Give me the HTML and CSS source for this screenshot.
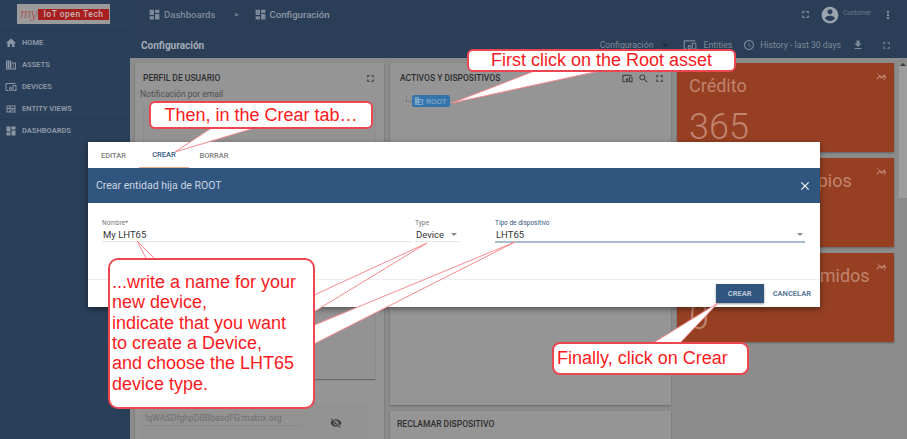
FILE: index.html
```html
<!DOCTYPE html>
<html lang="es">
<head>
  <meta charset="UTF-8">
  <meta name="viewport" content="width=device-width, initial-scale=1.0">
  <title>Configuración</title>
  <link rel="stylesheet" href="styles.css">
</head>
<body>
  <svg class="sprite" xmlns="http://www.w3.org/2000/svg">
    <symbol id="i-home" viewBox="0 0 24 24"><path d="M10 20v-6h4v6h5v-8h3L12 3 2 12h3v8z"/></symbol>
    <symbol id="i-domain" viewBox="0 0 24 24"><path d="M12 7V3H2v18h20V7H12zM6 19H4v-2h2v2zm0-4H4v-2h2v2zm0-4H4V9h2v2zm0-4H4V5h2v2zm4 12H8v-2h2v2zm0-4H8v-2h2v2zm0-4H8V9h2v2zm0-4H8V5h2v2zm10 12h-8v-2h2v-2h-2v-2h2v-2h-2V9h8v10zm-2-8h-2v2h2v-2zm0 4h-2v2h2v-2z"/></symbol>
    <symbol id="i-devices" viewBox="0 0 24 24"><path d="M3 6h18V4H3c-1.1 0-2 .9-2 2v12c0 1.1.9 2 2 2h4v-2H3V6zm10 6H9v1.78c-.61.55-1 1.33-1 2.22s.39 1.67 1 2.22V20h4v-1.78c.61-.55 1-1.34 1-2.22s-.39-1.67-1-2.22V12zm-2 5.5c-.83 0-1.5-.67-1.5-1.5s.67-1.5 1.5-1.5 1.5.67 1.5 1.5-.67 1.5-1.5 1.5zM22 8h-6c-.5 0-1 .5-1 1v10c0 .5.5 1 1 1h6c.5 0 1-.5 1-1V9c0-.5-.5-1-1-1zm-1 10h-4v-8h4v8z"/></symbol>
    <symbol id="i-views" viewBox="0 0 24 24"><path d="M3 5h18v14H3zM5 7v3h4V7zm6 0v3h8V7zm-6 5v5h4v-5zm6 0v2h3v-2zm5 0v2h3v-2zm-5 3v2h8v-2z" fill-rule="evenodd"/></symbol>
    <symbol id="i-dash" viewBox="0 0 24 24"><path d="M3 13h8V3H3v10zm0 8h8v-6H3v6zm10 0h8V11h-8v10zm0-18v6h8V3h-8z"/></symbol>
    <symbol id="i-full" viewBox="0 0 24 24"><path d="M7 14H5v5h5v-2H7v-3zm-2-4h2V7h3V5H5v5zm12 7h-3v2h5v-5h-2v3zM14 5v2h3v3h2V5h-5z"/></symbol>
    <symbol id="i-account" viewBox="0 0 24 24"><path d="M12 2C6.48 2 2 6.48 2 12s4.48 10 10 10 10-4.48 10-10S17.52 2 12 2zm0 3c1.66 0 3 1.34 3 3s-1.34 3-3 3-3-1.34-3-3 1.34-3 3-3zm0 14.2c-2.5 0-4.71-1.28-6-3.22.03-1.99 4-3.08 6-3.08 1.99 0 5.97 1.09 6 3.08-1.29 1.94-3.5 3.22-6 3.22z"/></symbol>
    <symbol id="i-more" viewBox="0 0 24 24"><path d="M12 8c1.1 0 2-.9 2-2s-.9-2-2-2-2 .9-2 2 .9 2 2 2zm0 2c-1.1 0-2 .9-2 2s.9 2 2 2 2-.9 2-2-.9-2-2-2zm0 6c-1.1 0-2 .9-2 2s.9 2 2 2 2-.9 2-2-.9-2-2-2z"/></symbol>
    <symbol id="i-search" viewBox="0 0 24 24"><path d="M15.5 14h-.79l-.28-.27C15.41 12.59 16 11.11 16 9.5 16 5.91 13.09 3 9.5 3S3 5.91 3 9.5 5.91 16 9.5 16c1.61 0 3.09-.59 4.23-1.57l.27.28v.79l5 4.99L20.49 19l-4.99-5zm-6 0C7.01 14 5 11.99 5 9.5S7.01 5 9.5 5 14 7.01 14 9.5 11.99 14 9.5 14z"/></symbol>
    <symbol id="i-clock" viewBox="0 0 24 24"><path d="M11.99 2C6.47 2 2 6.48 2 12s4.47 10 9.99 10C17.52 22 22 17.52 22 12S17.52 2 11.99 2zM12 20c-4.42 0-8-3.58-8-8s3.58-8 8-8 8 3.58 8 8-3.58 8-8 8zm.5-13H11v6l5.25 3.15.75-1.23-4.5-2.67z"/></symbol>
    <symbol id="i-download" viewBox="0 0 24 24"><path d="M19 9h-4V3H9v6H5l7 7 7-7zM5 18v2h14v-2H5z"/></symbol>
    <symbol id="i-close" viewBox="0 0 24 24"><path d="M19 6.41L17.59 5 12 10.59 6.41 5 5 6.41 10.59 12 5 17.59 6.41 19 12 13.41 17.59 19 19 17.59 13.41 12z"/></symbol>
    <symbol id="i-eye-off" viewBox="0 0 24 24"><path d="M12 7c2.76 0 5 2.24 5 5 0 .65-.13 1.26-.36 1.83l2.92 2.92c1.51-1.26 2.7-2.89 3.43-4.75-1.73-4.39-6-7.5-11-7.5-1.4 0-2.74.25-3.98.7l2.16 2.16C10.74 7.13 11.35 7 12 7zM2 4.27l2.28 2.28.46.46C3.08 8.3 1.78 10.02 1 12c1.73 4.39 6 7.5 11 7.5 1.55 0 3.03-.3 4.38-.84l.42.42L19.73 22 21 20.73 3.27 3 2 4.27zM7.53 9.8l1.55 1.55c-.05.21-.08.43-.08.65 0 1.66 1.34 3 3 3 .22 0 .44-.03.65-.08l1.55 1.55c-.67.33-1.41.53-2.2.53-2.76 0-5-2.24-5-5 0-.79.2-1.53.53-2.2zm4.31-.78l3.15 3.15.02-.16c0-1.66-1.34-3-3-3l-.17.01z"/></symbol>
    <symbol id="i-pin" viewBox="0 0 24 24"><path d="M1 17l7-8 4 4 6-6 5 8-4 1-2-4-5 5-4-4-5 6zM3 5l18 14-1 1L2 6z"/></symbol>
  </svg>

  <div class="app">
    <aside class="sidebar">
      <div class="logo">
        <span class="logo-my">my</span>
        <span class="logo-name">IoT open Tech</span>
      </div>
      <nav>
        <a class="nav-item"><svg class="icon"><use href="#i-home"/></svg>HOME</a>
        <a class="nav-item"><svg class="icon"><use href="#i-domain"/></svg>ASSETS</a>
        <a class="nav-item"><svg class="icon"><use href="#i-devices"/></svg>DEVICES</a>
        <a class="nav-item"><svg class="icon"><use href="#i-views"/></svg>ENTITY VIEWS</a>
        <a class="nav-item"><svg class="icon"><use href="#i-dash"/></svg>DASHBOARDS</a>
      </nav>
    </aside>

    <div class="main">
      <header class="topbar">
        <div class="crumbs">
          <svg class="icon crumb-icon"><use href="#i-dash"/></svg>
          <span class="crumb">Dashboards</span>
          <span class="crumb-sep">&gt;</span>
          <svg class="icon crumb-icon"><use href="#i-dash"/></svg>
          <span class="crumb crumb-last">Configuración</span>
        </div>
        <div class="user">
          <svg class="icon user-full"><use href="#i-full"/></svg>
          <svg class="icon user-avatar"><use href="#i-account"/></svg>
          <span class="user-role">Customer</span>
          <svg class="icon user-more"><use href="#i-more"/></svg>
        </div>
      </header>

      <div class="pagebar">
        <span class="page-title">Configuración</span>
        <div class="page-tools">
          <span class="tool tool-state">Configuración</span>
          <span class="caret caret-dark"></span>
          <svg class="icon tool-entities"><use href="#i-devices"/></svg>
          <span class="tool tool-ent">Entities</span>
          <svg class="icon tool-clock"><use href="#i-clock"/></svg>
          <span class="tool tool-hist">History - last 30 days</span>
          <svg class="icon tool-dl"><use href="#i-download"/></svg>
          <svg class="icon tool-full"><use href="#i-full"/></svg>
        </div>
      </div>

      <div class="content">
        <div class="grid">
          <div class="col">
            <section class="card card-user">
              <div class="card-head">
                <h2>PERFIL DE USUARIO</h2>
                <svg class="icon card-icon"><use href="#i-full"/></svg>
              </div>
              <p class="card-note">Notificación por email</p>
              <div class="inner inner-mail"></div>
              <div class="inner inner-matrix">
                <span class="matrix-id">!qWASDfghpDBBbasdFG:matrix.org</span>
                <svg class="icon eye"><use href="#i-eye-off"/></svg>
              </div>
            </section>
          </div>

          <div class="col">
            <section class="card card-tree">
              <div class="card-head card-head-tree">
                <h2>ACTIVOS Y DISPOSITIVOS</h2>
                <svg class="icon card-icon"><use href="#i-devices"/></svg>
                <svg class="icon card-icon"><use href="#i-search"/></svg>
                <svg class="icon card-icon"><use href="#i-full"/></svg>
              </div>
              <div class="tree">
                <span class="tree-line"></span>
                <span class="tree-node"><svg class="icon"><use href="#i-domain"/></svg>ROOT</span>
              </div>
            </section>
            <section class="card card-claim">
              <h2>RECLAMAR DISPOSITIVO</h2>
            </section>
          </div>

          <div class="col">
            <section class="stat">
              <svg class="icon stat-pin"><use href="#i-pin"/></svg>
              <div class="stat-title">Crédito</div>
              <div class="stat-value">365</div>
            </section>
            <section class="stat">
              <svg class="icon stat-pin"><use href="#i-pin"/></svg>
              <div class="stat-title">Dispositivos propios</div>
              <div class="stat-value">0</div>
            </section>
            <section class="stat">
              <svg class="icon stat-pin"><use href="#i-pin"/></svg>
              <div class="stat-title">Mensajes consumidos</div>
              <div class="stat-value">0</div>
            </section>
          </div>
        </div>
        <div class="scrollbar">
          <div class="scroll-arrow"></div>
          <div class="scroll-thumb"></div>
        </div>
      </div>
    </div>
  </div>

  <div class="modal">
    <div class="tabs">
      <span class="tab">EDITAR</span>
      <span class="tab tab-active">CREAR</span>
      <span class="tab">BORRAR</span>
    </div>
    <div class="modal-head">
      <span>Crear entidad hija de ROOT</span>
      <svg class="icon modal-close"><use href="#i-close"/></svg>
    </div>
    <div class="modal-body">
      <div class="field field-name">
        <label>Nombre*</label>
        <div class="field-value">My LHT65</div>
      </div>
      <div class="field field-type">
        <label>Type</label>
        <div class="field-value">Device<span class="caret"></span></div>
      </div>
      <div class="field field-device">
        <label>Tipo de dispositivo</label>
        <div class="field-value">LHT65<span class="caret"></span></div>
      </div>
    </div>
    <div class="modal-foot">
      <button class="btn btn-primary">CREAR</button>
      <button class="btn">CANCELAR</button>
    </div>
  </div>

  <svg class="tails" width="907" height="439" viewBox="0 0 907 439" xmlns="http://www.w3.org/2000/svg">
    <polygon points="452,103 537,70 604,70"/>
    <polygon points="175,152 213,127 258,127"/>
    <polygon points="137,241 147,260 156,260"/>
    <polygon points="427,243 312,296 312,313"/>
    <polygon points="515,242 312,326 312,345"/>
    <polygon points="718,303 653,343 680,343"/>
  </svg>

  <div class="callout callout-root">First click on the Root asset</div>
  <div class="callout callout-tab">Then, in the Crear tab…</div>
  <div class="callout callout-form">...write a name for your<br>new device,<br>indicate that you want<br>to create a Device,<br>and choose the LHT65<br>device type.</div>
  <div class="callout callout-end">Finally, click on Crear</div>
</body>
</html>
```

FILE: styles.css
```css
* {
  box-sizing: border-box;
}

html, body {
  margin: 0;
  height: 100%;
}

body {
  position: relative;
  width: 907px;
  height: 439px;
  overflow: hidden;
  font-family: 'Roboto', sans-serif;
  background-color: #8c8c8c;
}

.sprite {
  display: none;
}

.icon {
  display: block;
  width: 12px;
  height: 12px;
  fill: currentColor;
  flex: none;
}

.app {
  display: flex;
  height: 439px;
}

/* sidebar */
.sidebar {
  width: 130px;
  flex: none;
  background-color: #2a3f59;
  color: #8b96a4;
}

.logo {
  display: flex;
  align-items: center;
  justify-content: space-between;
  width: 93px;
  height: 20px;
  margin: 4px 0 7px 17px;
  padding: 2px 1px 2px 3px;
  background-color: #9b9b9b;
}

.logo-my {
  font-family: 'DejaVu Serif', serif;
  font-style: italic;
  font-size: 12px;
  letter-spacing: -1px;
  color: #a85a5a;
}

.logo-name {
  width: 71px;
  height: 11px;
  line-height: 11px;
  font-size: 8.5px;
  font-weight: 500;
  letter-spacing: 0.5px;
  text-align: center;
  white-space: nowrap;
  color: #c9b7b7;
  background-color: #a81f20;
}

.nav-item {
  display: flex;
  align-items: center;
  gap: 5px;
  height: 22px;
  padding-left: 5px;
  font-size: 7.5px;
  font-weight: 700;
  border-top: 1px solid #283b53;
}

/* top bars */
.main {
  flex: 1;
  min-width: 0;
  display: flex;
  flex-direction: column;
}

.topbar {
  display: flex;
  align-items: center;
  justify-content: space-between;
  height: 29px;
  background-color: #2b3e57;
  color: #7e8a99;
}

.crumbs {
  display: flex;
  align-items: center;
  padding: 0 0 1px 18px;
  font-size: 9.6px;
  font-weight: 500;
}

.crumb-icon {
  width: 13px;
  height: 13px;
  margin-right: 3px;
}

.crumb-sep {
  margin: 0 15px 0 19px;
  font-size: 8px;
  color: #8e99a6;
}

.crumb-last {
  color: #8e99a6;
}

.user {
  display: flex;
  align-items: center;
  padding-right: 13px;
  color: #9aa3ae;
}

.user-full {
  width: 11px;
  height: 11px;
}

.user-avatar {
  width: 20px;
  height: 20px;
  margin-left: 9px;
}

.user-role {
  align-self: flex-start;
  width: 36px;
  margin: 4px 0 0 3px;
  font-size: 6.5px;
  color: #6d7a8a;
}

.user-more {
  width: 12px;
  height: 12px;
  margin-left: 3px;
}

.pagebar {
  display: flex;
  align-items: center;
  justify-content: space-between;
  height: 29px;
  padding: 3px 15px 0 11px;
  background-color: #2b3e57;
  color: #7e8a99;
  font-size: 8.7px;
}

.page-title {
  font-size: 10px;
  font-weight: 700;
  color: #a3acb6;
}

.page-tools {
  display: flex;
  align-items: center;
}

.tool-ent {
  margin: 0 11px 0 7px;
}

.tool-clock {
  margin-right: 5px;
}

.tool-entities {
  width: 14px;
  height: 14px;
  margin-left: 15px;
}

.tool-dl {
  margin: 0 11px 0 11px;
}

.tool-full {
  width: 11px;
  height: 11px;
  margin-left: 6px;
}

/* dashboard */
.content {
  flex: 1;
  display: flex;
  min-height: 0;
  overflow: hidden;
}

.grid {
  display: grid;
  grid-template-columns: 249px 281px 217px;
  column-gap: 6px;
  padding: 5px 0 0 5px;
}

.col {
  display: flex;
  flex-direction: column;
  gap: 6px;
}

.card {
  background-color: #959595;
  box-shadow: 0 1px 2px rgba(0, 0, 0, 0.25);
}

.card h2 {
  margin: 0;
  font-size: 8.5px;
  font-weight: 500;
  color: #2e2e2e;
}

.card-user {
  height: 390px;
  padding: 9px 8px 0 5px;
}

.card-head {
  display: flex;
  align-items: center;
  gap: 5px;
  height: 12px;
  padding-left: 3px;
}

.card-head h2 {
  flex: 1;
}

.card-icon {
  width: 11px;
  height: 11px;
  color: #333;
}

.card-note {
  margin: 5px 0 7px;
  font-size: 8.5px;
  color: #505050;
}

.inner {
  margin-left: 4px;
  background-color: #939393;
}

.inner-mail {
  height: 273px;
  margin-right: 1px;
  box-shadow: 0 1px 1px rgba(0, 0, 0, 0.3);
}

.inner-matrix {
  display: flex;
  align-items: flex-start;
  justify-content: space-between;
  height: 50px;
  margin: 24px 9px 0 0;
  padding: 10px 25px 0 5px;
}

.matrix-id {
  width: 156px;
  padding-bottom: 2px;
  font-size: 8.7px;
  line-height: 10px;
  color: #6f6f6f;
  border-bottom: 1px solid #888;
}

.eye {
  margin-top: 4px;
  color: #3d3d3d;
}

.card-tree {
  height: 342px;
  padding: 9px 6px 0 10px;
}

.card-head-tree {
  padding-left: 0;
}

.tree {
  display: flex;
  align-items: center;
  margin-top: 11px;
  padding-left: 6px;
}

.tree-line {
  width: 6px;
  height: 6px;
  border-left: 1px solid #7e7e7e;
  border-bottom: 1px solid #7e7e7e;
  margin-bottom: 4px;
}

.tree-node {
  display: flex;
  align-items: center;
  gap: 2px;
  width: 38px;
  height: 12px;
  padding-left: 2px;
  font-size: 8px;
  color: #8fb0cc;
  background-color: #3575ad;
  border-radius: 2px;
}

.tree-node .icon {
  width: 10px;
  height: 10px;
}

.card-claim {
  height: 40px;
  padding: 8px 7px;
}

.stat {
  position: relative;
  height: 89px;
  padding: 13px 12px 0;
  background-color: #963f22;
  color: #c0846f;
  box-shadow: 0 1px 2px rgba(0, 0, 0, 0.3);
}

.stat-pin {
  position: absolute;
  top: 8px;
  right: 7px;
  width: 11px;
  height: 11px;
}

.stat-title {
  font-size: 18px;
  line-height: 20px;
}

.stat-value {
  margin-top: 10px;
  font-size: 36px;
  line-height: 42px;
  font-weight: 300;
}

.scrollbar {
  width: 8px;
  margin-left: auto;
  background-color: #8b8b8b;
}

.scroll-arrow {
  width: 0;
  height: 0;
  margin: 5px auto 0;
  border-left: 3px solid transparent;
  border-right: 3px solid transparent;
  border-bottom: 3px solid #3e3e3e;
}

.scroll-thumb {
  height: 132px;
  background-color: #9e9e9e;
}

/* modal */
.modal {
  position: absolute;
  top: 142px;
  left: 88px;
  display: flex;
  flex-direction: column;
  width: 732px;
  height: 165px;
  background-color: #fff;
  box-shadow: 0 2px 6px rgba(0, 0, 0, 0.45);
}

.tabs {
  display: flex;
  height: 26px;
  font-size: 7.5px;
  font-weight: 500;
  color: #7b7b7b;
}

.tab {
  display: flex;
  align-items: center;
  justify-content: center;
  width: 50px;
}

.tab:first-child {
  width: 51px;
}

.tab-active {
  color: #30557f;
  border-bottom: 1px solid #f3a88c;
}

.modal-head {
  display: flex;
  align-items: center;
  justify-content: space-between;
  height: 35px;
  padding: 0 8px 0 8px;
  background-color: #30557f;
  color: #ccd6e1;
  font-size: 10.5px;
}

.modal-close {
  width: 14px;
  height: 14px;
  color: #f2f5f8;
}

.modal-body {
  display: flex;
  height: 76px;
  padding: 16px 14px 0;
}

.field label {
  display: block;
  height: 9px;
  font-size: 6.5px;
  line-height: 9px;
  color: #777;
}

.field-value {
  display: flex;
  align-items: center;
  justify-content: space-between;
  height: 14px;
  padding: 0 2px 0 1px;
  font-size: 9.5px;
  color: #333;
  border-bottom: 1px solid #e6e6e6;
}

.field-name {
  width: 310px;
  margin-right: 3px;
}

.field-type {
  width: 44px;
  margin-right: 36px;
}

.field-device {
  width: 310px;
}

.field-device label {
  color: #30557f;
}

.field-device .field-value {
  height: 15px;
  border-bottom: 2px solid #a9bccf;
}

.caret {
  display: block;
  width: 0;
  height: 0;
  border-left: 3px solid transparent;
  border-right: 3px solid transparent;
  border-top: 3px solid #888;
}

.caret-dark {
  margin-left: 8px;
  border-top-color: #1f2c3d;
}

.modal-foot {
  display: flex;
  align-items: center;
  justify-content: flex-end;
  gap: 9px;
  height: 28px;
  padding-right: 9px;
  border-top: 1px solid #eee;
}

.btn {
  padding: 0;
  border: none;
  background: none;
  font-family: inherit;
  font-size: 7.5px;
  font-weight: 700;
  color: #5d7898;
}

.btn-primary {
  width: 48px;
  height: 19px;
  color: #bcc8d6;
  background-color: #30557f;
  box-shadow: 0 1px 2px rgba(0, 0, 0, 0.4);
}

/* annotations on top of the screenshot */
.tails {
  position: absolute;
  top: 0;
  left: 0;
}

.tails polygon {
  fill: #fff;
  stroke: #f58a8e;
  stroke-width: 1;
}

.callout {
  position: absolute;
  display: flex;
  align-items: center;
  justify-content: center;
  font-family: 'Liberation Sans', sans-serif;
  font-size: 18px;
  color: #fb1a22;
  white-space: nowrap;
  background-color: #fff;
  border: 2px solid #ee4650;
  border-radius: 6px;
}

.callout-root {
  top: 49px;
  left: 467px;
  width: 269px;
  height: 23px;
}

.callout-tab {
  top: 101px;
  left: 149px;
  width: 224px;
  height: 28px;
}

.callout-form {
  top: 258px;
  left: 108px;
  display: block;
  width: 207px;
  height: 151px;
  padding: 12px 2px 0 2px;
  line-height: 20.35px;
  border-radius: 10px;
}

.callout-end {
  top: 342px;
  left: 552px;
  justify-content: flex-start;
  width: 197px;
  height: 33px;
  padding-left: 3px;
  border-radius: 8px;
}
```
